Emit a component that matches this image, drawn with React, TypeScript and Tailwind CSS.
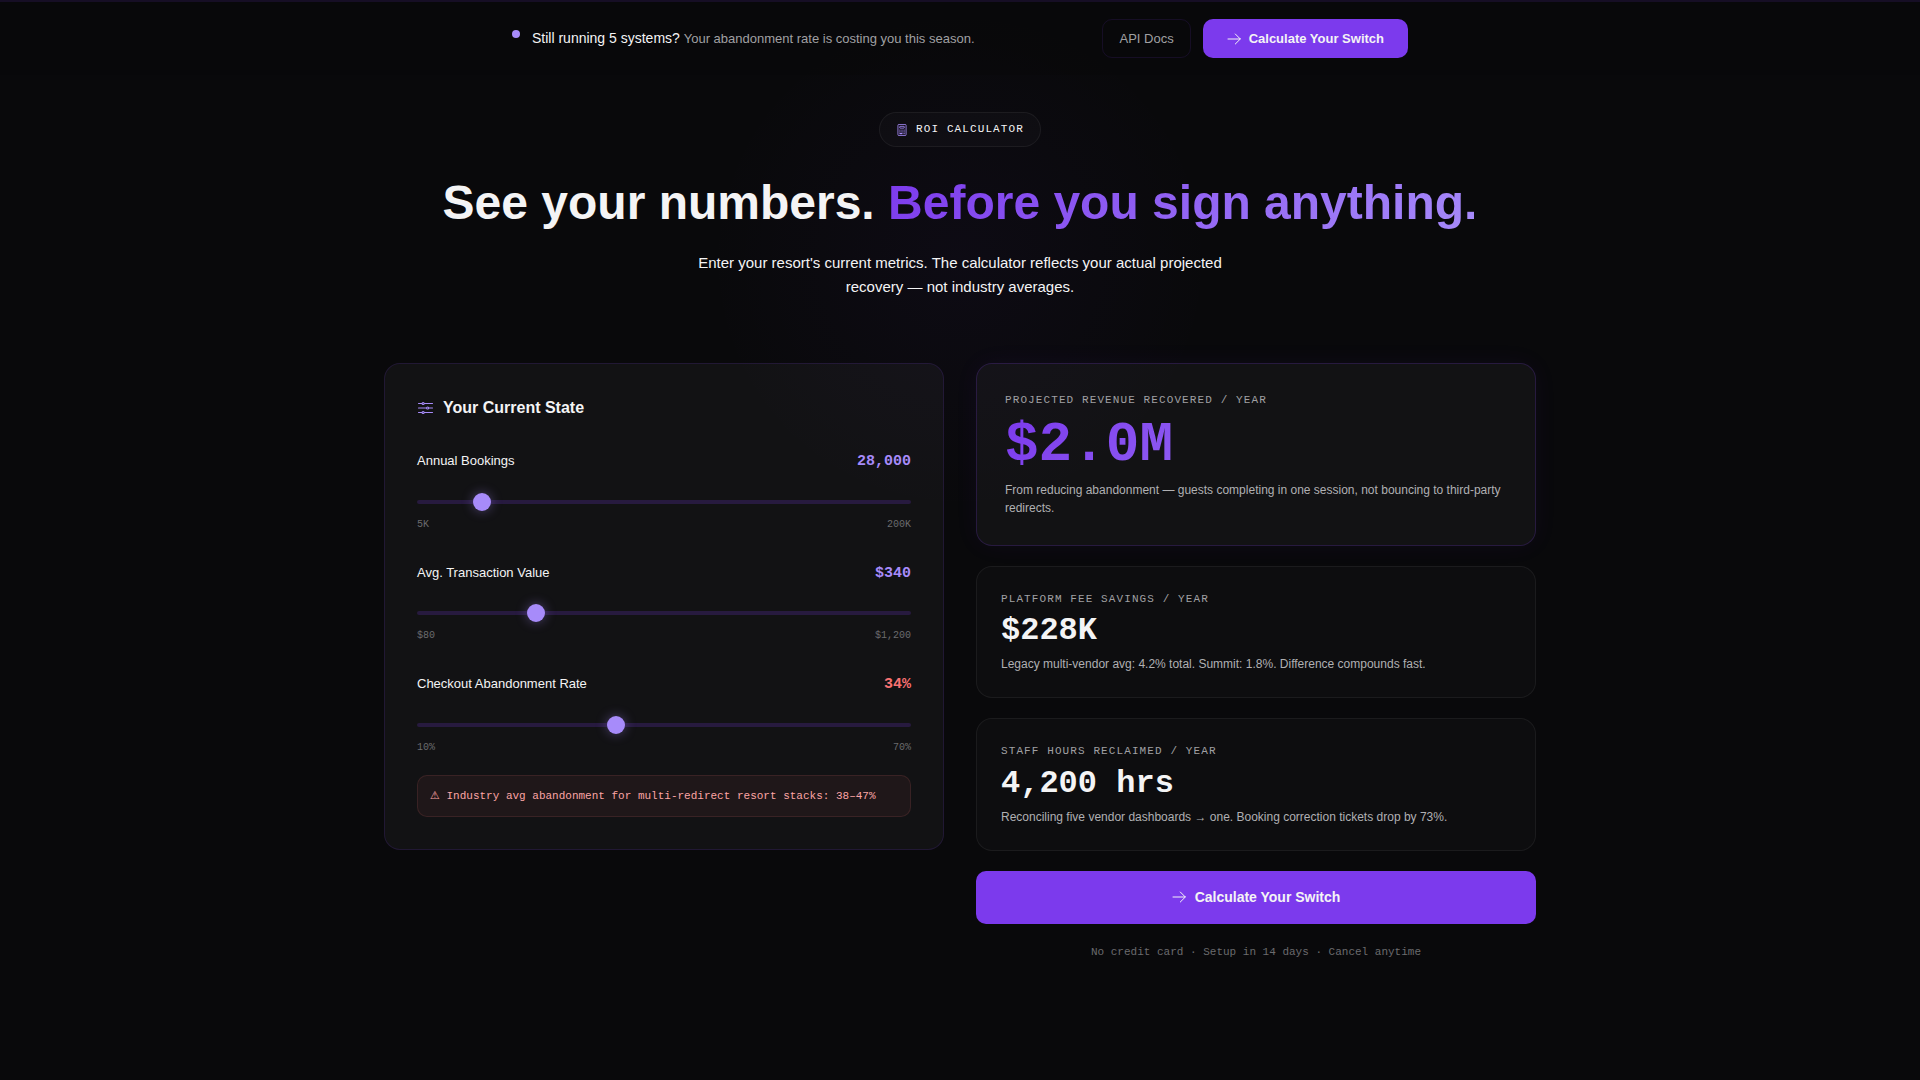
import React, { useState } from 'react';

interface SliderFieldProps {
  id: string;
  label: string;
  min: number;
  max: number;
  step: number;
  minLabel: string;
  maxLabel: string;
  value: number;
  display: string;
  danger?: boolean;
  onChange: (value: number) => void;
}

interface ResultCardProps {
  label: string;
  value: string;
  note: string;
}

const ArrowIcon: React.FC = () => (
  <svg className="h-4 w-[14px] shrink-0" viewBox="0 0 14 16" fill="none" stroke="currentColor" aria-hidden="true">
    <path strokeLinecap="round" strokeLinejoin="round" d="M1 8H13.3M8.3 3L13.3 8L8.3 13" />
  </svg>
);

const CalculatorIcon: React.FC = () => (
  <svg className="h-3 w-3 shrink-0 text-[#a78bfa]" viewBox="0 0 512 512" fill="none" stroke="currentColor" strokeWidth={36} aria-hidden="true">
    <rect x="82" y="18" width="348" height="476" rx="44" />
    <rect x="160" y="100" width="192" height="76" rx="12" />
    <path strokeLinecap="round" strokeWidth={56} d="M168 260h1M256 260h1M344 260h1M168 336h1M256 336h1M344 336h1M168 412h88M344 412h1" />
  </svg>
);

const SlidersIcon: React.FC = () => (
  <svg className="h-4 w-4 shrink-0 text-[#a78bfa]" viewBox="0 0 512 512" fill="none" stroke="currentColor" strokeWidth={34} strokeLinecap="round" aria-hidden="true">
    <path d="M48 112h112M232 112h264M48 256h256M376 256h120M48 400h112M232 400h264" />
    <circle cx="196" cy="112" r="34" />
    <circle cx="340" cy="256" r="34" />
    <circle cx="196" cy="400" r="34" />
  </svg>
);

const SliderField: React.FC<SliderFieldProps> = ({
  id,
  label,
  min,
  max,
  step,
  minLabel,
  maxLabel,
  value,
  display,
  danger,
  onChange
}) => (
  <div>
    <div className="flex items-baseline justify-between pt-px">
      <label htmlFor={id} className="text-[13px]">{label}</label>
      <output
        htmlFor={id}
        className={`font-['Liberation_Mono',monospace] text-[15px] font-bold ${danger ? 'text-[#f87171]' : 'text-[#a78bfa]'}`}
      >
        {display}
      </output>
    </div>
    <input
      id={id}
      type="range"
      min={min}
      max={max}
      step={step}
      value={value}
      onChange={e => onChange(Number(e.target.value))}
      className="mt-[19px] block h-[18px] w-full cursor-pointer appearance-none bg-transparent [&::-webkit-slider-runnable-track]:h-1 [&::-webkit-slider-runnable-track]:rounded-sm [&::-webkit-slider-runnable-track]:bg-[#7c3aed]/20 [&::-webkit-slider-thumb]:-mt-[7px] [&::-webkit-slider-thumb]:size-[18px] [&::-webkit-slider-thumb]:appearance-none [&::-webkit-slider-thumb]:rounded-full [&::-webkit-slider-thumb]:bg-[#a78bfa] [&::-webkit-slider-thumb]:shadow-[0_0_12px_rgba(167,139,250,0.4)]"
    />
    <div className="mt-[6px] flex justify-between font-['Liberation_Mono',monospace] text-[10px] text-[#6b6b6e]">
      <span>{minLabel}</span>
      <span>{maxLabel}</span>
    </div>
  </div>
);

const ResultCard: React.FC<ResultCardProps> = ({ label, value, note }) => (
  <div className="rounded-2xl border border-white/6 bg-white/2 p-6">
    <p className="font-['Liberation_Mono',monospace] text-[11px] tracking-widest text-[#a0a0a3]">{label}</p>
    <p className="mt-2 font-['Liberation_Mono',monospace] text-[32px] leading-none font-bold">{value}</p>
    <p className="mt-2 text-[12px] text-[#b0b0b3]">{note}</p>
  </div>
);

export default function App() {
  const [bookings, setBookings] = useState(28000);
  const [transaction, setTransaction] = useState(340);
  const [abandonment, setAbandonment] = useState(34);

  return (
    <div className="relative min-h-screen overflow-hidden bg-[#09090b] font-['Liberation_Sans',Arial,sans-serif] text-zinc-100">
      {/* Glow behind the hero */}
      <div className="pointer-events-none absolute top-[-40px] left-1/2 size-[600px] -translate-x-1/2 bg-[radial-gradient(circle,rgba(124,58,237,0.04)_0%,transparent_60%)]" />

      {/* Top bar */}
      <header className="relative border-t-2 border-[#7c3aed]/12 bg-[#08080a]/60 px-6 py-4">
        <div className="mx-auto flex min-h-[41px] max-w-[896px] items-center justify-between">
          <div className="flex items-start gap-3">
            <span className="mt-[2px] size-2 rounded-full bg-[#a78bfa]" />
            <p className="text-[14px]">
              Still running 5 systems? <span className="text-[13px] text-[#a0a0a3]">Your abandonment rate is costing you this season.</span>
            </p>
          </div>
          <div className="flex items-center gap-3">
            <a href="#docs" className="rounded-[10px] border border-[#7c3aed]/12 px-4 py-[9px] text-[13px] text-[#a0a0a3]">
              API Docs
            </a>
            <button className="flex items-center gap-2 rounded-[10px] bg-[#7c3aed] px-6 py-[10px] text-[13px] font-bold">
              <ArrowIcon />
              Calculate Your Switch
            </button>
          </div>
        </div>
      </header>

      <main className="relative mx-auto max-w-[1200px] px-6 pt-[37px] pb-24">
        {/* Hero */}
        <div className="flex flex-col items-center text-center">
          <div className="flex items-center gap-2 rounded-full border border-white/6 bg-white/2 px-4 py-2 font-['Liberation_Mono',monospace] text-[11px] leading-[17px] tracking-widest">
            <CalculatorIcon />
            ROI CALCULATOR
          </div>
          <h1 className="mt-7 text-5xl leading-14 font-bold">
            See your numbers.{' '}
            <span className="bg-[linear-gradient(135deg,#7c3aed,#a78bfa)] bg-clip-text text-transparent">Before you sign anything.</span>
          </h1>
          <p className="mt-5 max-w-[560px] text-[15px] leading-6">
            Enter your resort's current metrics. The calculator reflects your actual projected recovery — not industry averages.
          </p>
        </div>

        <div className="mt-16 grid items-start gap-8 lg:grid-cols-2">
          {/* Inputs */}
          <section className="rounded-2xl border border-[#7c3aed]/15 bg-white/4 p-8">
            <h2 className="flex items-center gap-[10px] text-base font-bold">
              <SlidersIcon />
              Your Current State
            </h2>
            <div className="mt-[30px] flex flex-col gap-[30px]">
              <SliderField
                id="bookings"
                label="Annual Bookings"
                min={5000}
                max={200000}
                step={1000}
                minLabel="5K"
                maxLabel="200K"
                value={bookings}
                display={bookings.toLocaleString('en-US')}
                onChange={setBookings}
              />
              <SliderField
                id="transaction"
                label="Avg. Transaction Value"
                min={80}
                max={1200}
                step={10}
                minLabel="$80"
                maxLabel="$1,200"
                value={transaction}
                display={`$${transaction.toLocaleString('en-US')}`}
                onChange={setTransaction}
              />
              <SliderField
                id="abandonment"
                label="Checkout Abandonment Rate"
                min={10}
                max={70}
                step={1}
                minLabel="10%"
                maxLabel="70%"
                value={abandonment}
                display={`${abandonment}%`}
                danger
                onChange={setAbandonment}
              />
            </div>
            <p className="mt-5 rounded-[10px] border border-[#f87171]/12 bg-[#f87171]/6 p-3 font-['Liberation_Mono',monospace] text-[11px] text-[#fca5a5]">
              <span className="font-['DejaVu_Sans',sans-serif] leading-none">⚠</span> Industry avg abandonment for multi-redirect resort stacks: 38–47%
            </p>
          </section>

          {/* Results */}
          <section className="flex flex-col gap-5">
            <div className="rounded-2xl border border-[#7c3aed]/20 bg-white/4 p-7 shadow-[0_0_24px_rgba(124,58,237,0.06)]">
              <p className="font-['Liberation_Mono',monospace] text-[11px] tracking-widest text-[#a0a0a3]">PROJECTED REVENUE RECOVERED / YEAR</p>
              <p className="mt-2 bg-[linear-gradient(135deg,#7c3aed,#a78bfa)] bg-clip-text font-['Liberation_Mono',monospace] text-[56px] leading-none font-bold text-transparent">
                $2.0M
              </p>
              <p className="mt-2 text-[12px] text-[#b0b0b3]">
                From reducing abandonment — guests completing in one session, not bouncing to third-party redirects.
              </p>
            </div>
            <ResultCard
              label="PLATFORM FEE SAVINGS / YEAR"
              value="$228K"
              note="Legacy multi-vendor avg: 4.2% total. Summit: 1.8%. Difference compounds fast."
            />
            <ResultCard
              label="STAFF HOURS RECLAIMED / YEAR"
              value="4,200 hrs"
              note="Reconciling five vendor dashboards → one. Booking correction tickets drop by 73%."
            />
            <button className="flex items-center justify-center gap-[9px] rounded-[10px] bg-[#7c3aed] p-4 text-[14px] font-bold">
              <ArrowIcon />
              Calculate Your Switch
            </button>
            <p className="text-center font-['Liberation_Mono',monospace] text-[11px] text-[#6b6b6e]">
              No credit card · Setup in 14 days · Cancel anytime
            </p>
          </section>
        </div>
      </main>
    </div>
  );
}
